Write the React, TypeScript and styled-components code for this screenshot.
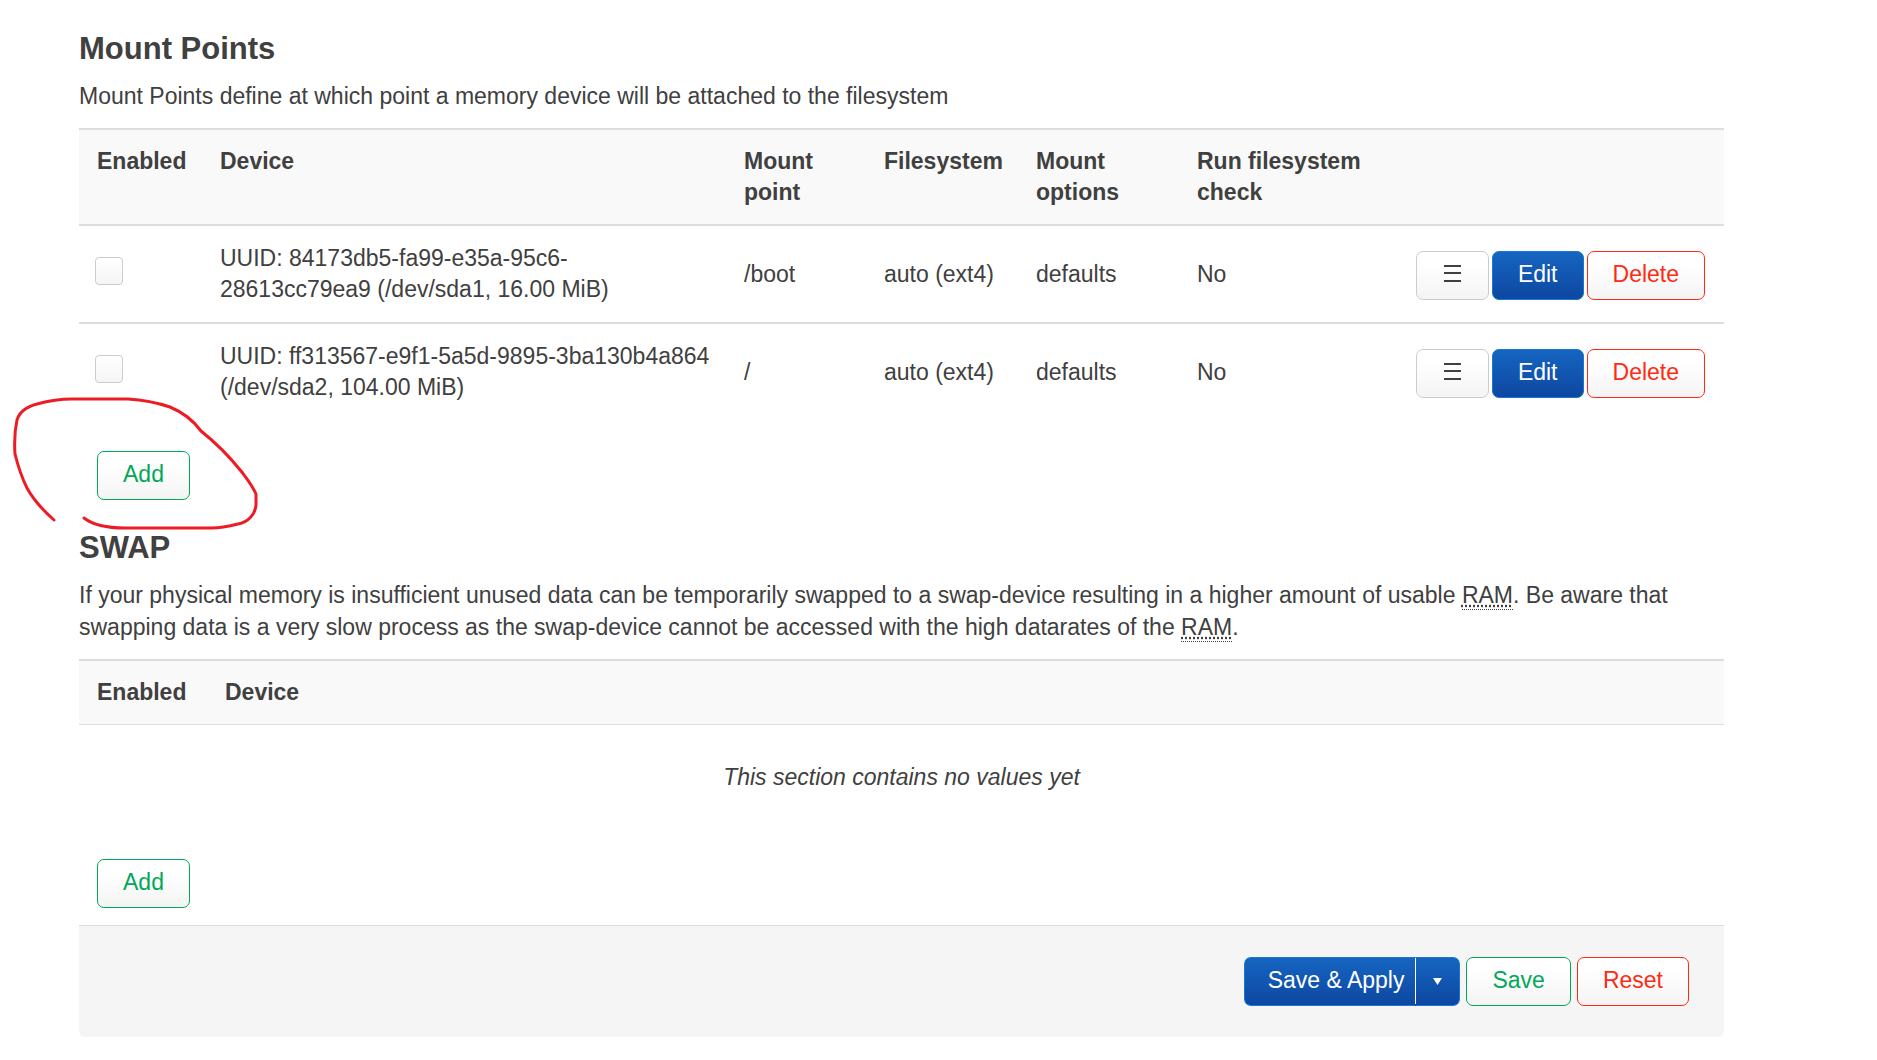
import React, { useState } from "react";
import styled, { createGlobalStyle, css } from "styled-components";

const GlobalStyle = createGlobalStyle`
  *, *::before, *::after { box-sizing: border-box; }
  body {
    margin: 0;
    background: #fff;
    color: #404040;
    font-family: "Liberation Sans", Arial, Helvetica, sans-serif;
    font-size: 23px;
    line-height: 31px;
  }
`;

const Page = styled.main`
  padding: 18px 153px 22px 79px;
`;

const Title = styled.h3`
  margin: 0;
  font-size: 31px;
  line-height: 62px;
`;

const Description = styled.p`
  margin: 0 0 16px;
  line-height: 32px;
`;

const Abbr = styled.abbr`
  padding-bottom: 1px;
  border-bottom: 1px dotted #404040;
  text-decoration: underline dotted;
`;

const Table = styled.table`
  width: 100%;
  table-layout: fixed;
  border-collapse: collapse;
  border-top: 2px solid #ddd;
`;

const Col = styled.col<{ $width?: number }>`
  ${(p) => p.$width && css`width: ${p.$width}px;`}
`;

const HeadRow = styled.tr<{ $rule: number }>`
  background: #f9f9f9;
  border-bottom: ${(p) => p.$rule}px solid #ddd;
`;

const HeadCell = styled.th`
  padding: 16px 18px;
  text-align: left;
  vertical-align: top;
`;

const Row = styled.tr`
  & + & {
    border-top: 2px solid #ddd;
  }
`;

const Cell = styled.td`
  padding: 17px 16px 17px 18px;
  vertical-align: middle;
`;

const EmptyCell = styled.td`
  height: 103px;
  padding: 2px 0 0;
  text-align: center;
  font-style: italic;
`;

const Checkbox = styled.input`
  appearance: none;
  display: block;
  width: 28px;
  height: 28px;
  margin: 0 0 6px -2px;
  border: 1px solid #ccc;
  border-radius: 4px;
  background: linear-gradient(#fff, #f5f5f5);
  &:checked {
    background: #1565c0;
  }
`;

const Actions = styled.div`
  display: flex;
  justify-content: flex-end;
  gap: 3px;
  padding: 2px 3px 0 0;
`;

type Tone = "neutral" | "primary" | "positive" | "negative";

const tones = {
  neutral: css`
    color: #404040;
    border-color: #ccc;
  `,
  primary: css`
    color: #fff;
    border-color: #1976d2;
    background: linear-gradient(#1565c0, #0d47a1);
  `,
  positive: css`
    color: #00a859;
    border-color: #00a859;
  `,
  negative: css`
    color: #ff2a12;
    border-color: #ff2a12;
  `,
};

const Button = styled.button<{ $tone: Tone }>`
  display: flex;
  align-items: center;
  height: 49px;
  padding: 0 25px 2px;
  border: 1px solid;
  border-radius: 7px;
  background: linear-gradient(#fff, #fff 25%, #f4f4f4);
  font: inherit;
  white-space: nowrap;
  cursor: pointer;
  ${(p) => tones[p.$tone]}
`;

const SplitButton = styled.div`
  display: flex;
`;

const SplitMain = styled(Button)`
  padding: 0 11px 2px 23px;
  border-right: 0;
  border-radius: 7px 0 0 7px;
`;

const SplitToggle = styled(Button)`
  padding: 0 17px;
  border-left: 0;
  border-radius: 0 7px 7px 0;
`;

const SplitDivider = styled.span`
  width: 1px;
  background: linear-gradient(#1976d2 1px, #fff 1px, #fff 47px, #0d47a1 47px);
`;

const AddBar = styled.div`
  position: relative;
  display: flex;
  padding: 31px 18px 17px;
`;

const Scribble = styled.svg`
  position: absolute;
  left: -79px;
  top: -31px;
  width: 270px;
  height: 150px;
  fill: none;
  stroke: #ed1c24;
  stroke-width: 3;
  stroke-linecap: round;
  stroke-linejoin: round;
  pointer-events: none;
`;

const Footer = styled.footer`
  display: flex;
  justify-content: flex-end;
  gap: 6px;
  padding: 31px 35px;
  border-top: 1px solid #ddd;
  border-radius: 0 0 6px 6px;
  background: #f5f5f5;
`;

const MenuIcon = () => (
  <svg width="21" height="23" viewBox="0 0 21 23" aria-hidden="true">
    <path d="M2 3h17M2 10h17M2 18h17" stroke="currentColor" strokeWidth="2" />
  </svg>
);

const mounts = [
  {
    device: "UUID: 84173db5-fa99-e35a-95c6-28613cc79ea9 (/dev/sda1, 16.00 MiB)",
    point: "/boot",
  },
  {
    device: "UUID: ff313567-e9f1-5a5d-9895-3ba130b4a864 (/dev/sda2, 104.00 MiB)",
    point: "/",
  },
];

function MountRow({ device, point }: { device: string; point: string }) {
  const [enabled, setEnabled] = useState(false);
  return (
    <Row>
      <Cell>
        <Checkbox
          type="checkbox"
          aria-label={`Enable ${point}`}
          checked={enabled}
          onChange={(e) => setEnabled(e.target.checked)}
        />
      </Cell>
      <Cell>{device}</Cell>
      <Cell>{point}</Cell>
      <Cell>auto (ext4)</Cell>
      <Cell>defaults</Cell>
      <Cell>No</Cell>
      <Cell>
        <Actions>
          <Button $tone="neutral" type="button" aria-label="Drag to reorder">
            <MenuIcon />
          </Button>
          <Button $tone="primary" type="button">Edit</Button>
          <Button $tone="negative" type="button">Delete</Button>
        </Actions>
      </Cell>
    </Row>
  );
}

export default function App() {
  return (
    <>
      <GlobalStyle />
      <Page>
        <section>
          <Title>Mount Points</Title>
          <Description>
            Mount Points define at which point a memory device will be attached to the filesystem
          </Description>
          <Table>
            <colgroup>
              <Col $width={123} />
              <Col />
              <Col $width={140} />
              <Col $width={152} />
              <Col $width={161} />
              <Col $width={200} />
              <Col $width={345} />
            </colgroup>
            <thead>
              <HeadRow $rule={2}>
                <HeadCell>Enabled</HeadCell>
                <HeadCell>Device</HeadCell>
                <HeadCell>Mount point</HeadCell>
                <HeadCell>Filesystem</HeadCell>
                <HeadCell>Mount options</HeadCell>
                <HeadCell>Run filesystem check</HeadCell>
                <HeadCell />
              </HeadRow>
            </thead>
            <tbody>
              {mounts.map((m) => (
                <MountRow key={m.point} {...m} />
              ))}
            </tbody>
          </Table>
          <AddBar>
            <Button $tone="positive" type="button">Add</Button>
            <Scribble viewBox="0 390 270 150" aria-hidden="true">
              <path d="M54 521C45 513 34 502 27 489C22 479 18 467 15 455C14 440 15 430 17 421C20 411 29 407 37 405C48 402 60 400 72 400H128C145 401 158 404 170 408C182 413 193 421 201 432C216 444 229 457 241 472C247 480 252 486 256 495V506C255 516 248 523 238 525C230 527 222 529 212 529H125C108 529 93 526 84 519" />
            </Scribble>
          </AddBar>
        </section>

        <section>
          <Title>SWAP</Title>
          <Description>
            If your physical memory is insufficient unused data can be temporarily swapped to a
            swap-device resulting in a higher amount of usable{" "}
            <Abbr title="Random Access Memory">RAM</Abbr>. Be aware that swapping data is a very
            slow process as the swap-device cannot be accessed with the high datarates of the{" "}
            <Abbr title="Random Access Memory">RAM</Abbr>.
          </Description>
          <Table>
            <colgroup>
              <Col $width={128} />
              <Col />
            </colgroup>
            <thead>
              <HeadRow $rule={1}>
                <HeadCell>Enabled</HeadCell>
                <HeadCell>Device</HeadCell>
              </HeadRow>
            </thead>
            <tbody>
              <tr>
                <EmptyCell colSpan={2}>This section contains no values yet</EmptyCell>
              </tr>
            </tbody>
          </Table>
          <AddBar>
            <Button $tone="positive" type="button">Add</Button>
          </AddBar>
        </section>

        <Footer>
          <SplitButton>
            <SplitMain $tone="primary" type="button">Save &amp; Apply</SplitMain>
            <SplitDivider />
            <SplitToggle $tone="primary" type="button" aria-label="More apply options">
              <svg width="9" height="7" viewBox="0 0 9 7" aria-hidden="true">
                <path d="M0 0h9L4.500 7z" fill="currentColor" />
              </svg>
            </SplitToggle>
          </SplitButton>
          <Button $tone="positive" type="button">Save</Button>
          <Button $tone="negative" type="button">Reset</Button>
        </Footer>
      </Page>
    </>
  );
}
